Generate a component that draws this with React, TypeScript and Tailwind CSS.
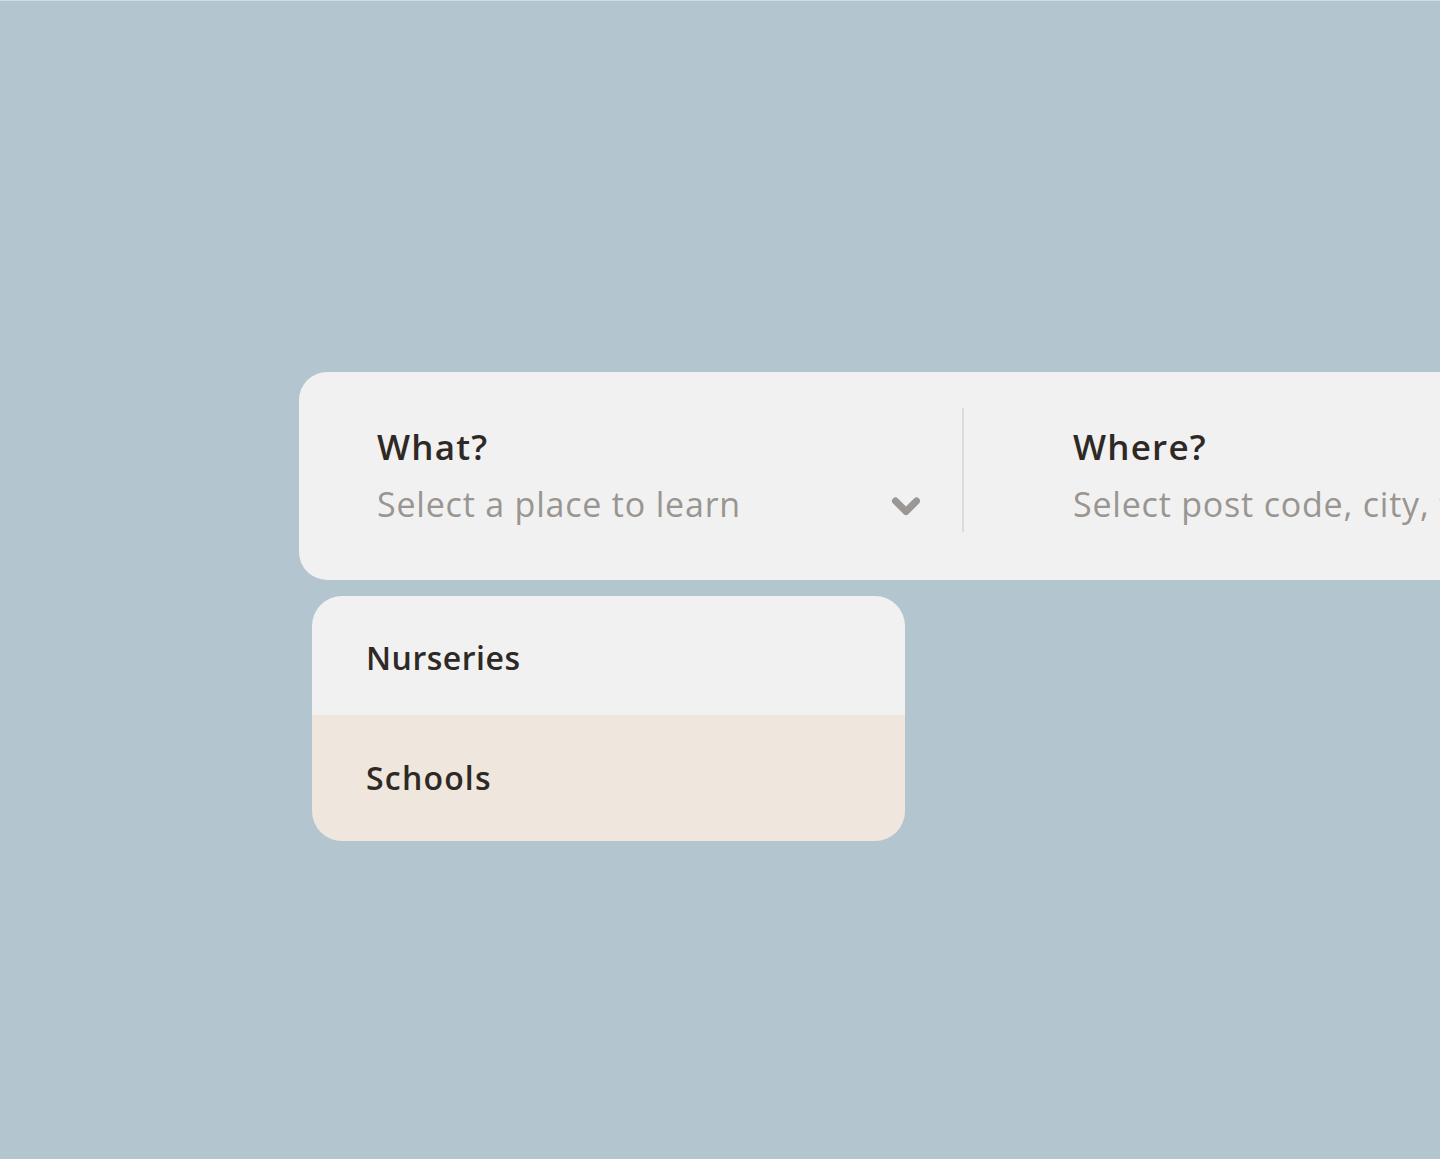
import React from "react";

export default function App() {
  const font = { fontFamily: '"Open Sans", "Noto Sans", sans-serif' };
  return (
    <div
      className="w-[1440px] h-[1159px] overflow-hidden bg-[#b3c5cf] border-t border-[#d3dbe0]"
      style={font}
    >
      <div className="pt-[371px] pl-[299px]">
        <div className="w-[1300px] h-[208px] bg-[#f1f1f1] rounded-[28px] flex items-start">
          <div className="w-[663px] pl-[78px] pr-[40px] pt-[55px] flex items-start">
            <div className="flex-1 flex flex-col">
              <span className="text-[35px] leading-[40px] font-semibold text-[#2e2925] tracking-[1.2px]">
                What?
              </span>
              <span className="mt-[17px] text-[34px] leading-[40px] text-[#999591] tracking-[0.8px] whitespace-nowrap">
                Select a place to learn
              </span>
            </div>
            <svg
              width="32"
              height="22"
              viewBox="0 0 32 22"
              className="mt-[69px]"
            >
              <path
                d="M5.5 5 L16 15.5 L26.5 5"
                fill="none"
                stroke="#9a9794"
                strokeWidth="7"
                strokeLinecap="round"
                strokeLinejoin="round"
              />
            </svg>
          </div>
          <div className="mt-[36px] w-[2px] h-[124px] bg-[#dcdcdc]" />
          <div className="pl-[109px] pt-[55px] flex flex-col">
            <span className="text-[35px] leading-[40px] font-semibold text-[#2e2925] tracking-[1.2px]">
              Where?
            </span>
            <span className="mt-[17px] text-[34px] leading-[40px] text-[#999591] tracking-[0.8px] whitespace-nowrap">
              Select post code, city, town
            </span>
          </div>
        </div>
        <div className="ml-[13px] mt-[16px] w-[593px] rounded-[30px] overflow-hidden">
          <div className="h-[119px] bg-[#f1f1f1] flex items-center pl-[54px] pt-[4px]">
            <span className="text-[32px] font-semibold text-[#2e2925] tracking-[0.5px]">
              Nurseries
            </span>
          </div>
          <div className="h-[126px] bg-[#efe7de] flex items-center pl-[54px]">
            <span className="text-[32px] font-semibold text-[#2e2925] tracking-[1.2px]">
              Schools
            </span>
          </div>
        </div>
      </div>
    </div>
  );
}
